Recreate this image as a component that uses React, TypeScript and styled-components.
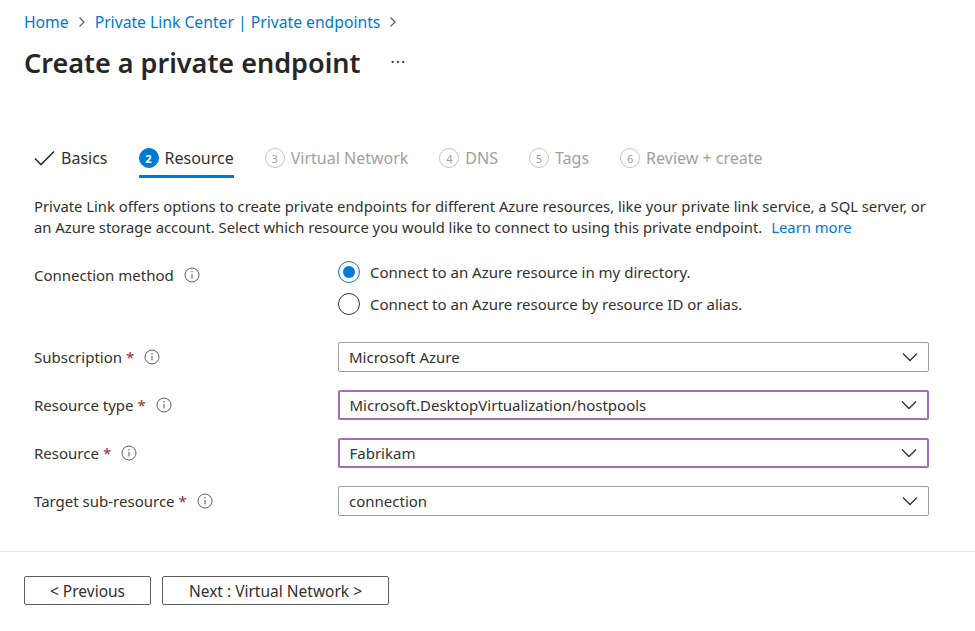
import React from "react";
import styled, { createGlobalStyle } from "styled-components";

const Global = createGlobalStyle`
  html, body { margin: 0; padding: 0; background: #ffffff; }
  body { font-family: "Noto Sans", "Open Sans", Arial, sans-serif; color: #323130; }
  * { box-sizing: border-box; }
`;

const Page = styled.div`
  width: 975px;
  height: 631px;
  overflow: hidden;
  display: flex;
  flex-direction: column;
`;

const Header = styled.div`
  padding: 11px 24px 0 24px;
`;

const Breadcrumb = styled.nav`
  display: flex;
  align-items: center;
  gap: 9px;
  font-size: 15.7px;
  line-height: 22px;
  color: #0078d4;
`;

const Crumb = styled.a`
  color: #0078d4;
  text-decoration: none;
`;

const Sep = styled.span`
  color: #605e5c;
  display: inline-flex;
  align-items: center;
`;

const TitleRow = styled.div`
  display: flex;
  align-items: center;
  gap: 30px;
  margin-top: 12px;
`;

const Title = styled.h1`
  margin: 0;
  font-size: 27px;
  line-height: 36px;
  font-weight: 600;
  color: #262626;
`;

const More = styled.span`
  font-size: 16px;
  color: #323130;
  letter-spacing: 1px;
  margin-top: -3px;
`;

const Body = styled.div`
  padding: 0 0 0 34px;
  flex: 1;
`;

const Tabs = styled.div`
  display: flex;
  gap: 31px;
  margin-top: 58px;
`;

const Tab = styled.div<{ $active?: boolean; $disabled?: boolean }>`
  display: flex;
  align-items: center;
  gap: 6px;
  height: 39px;
  padding-top: 2px;
  font-size: 16px;
  color: ${(p) => (p.$disabled ? "#a19f9d" : "#323130")};
  border-bottom: 3px solid ${(p) => (p.$active ? "#0078d4" : "transparent")};
`;

const Step = styled.span<{ $active?: boolean }>`
  width: 20px;
  height: 20px;
  border-radius: 50%;
  display: inline-flex;
  align-items: center;
  justify-content: center;
  font-size: 11px;
  font-weight: ${(p) => (p.$active ? 700 : 400)};
  color: ${(p) => (p.$active ? "#ffffff" : "#a19f9d")};
  background: ${(p) => (p.$active ? "#0078d4" : "transparent")};
  border: 1px solid ${(p) => (p.$active ? "#0078d4" : "#c8c6c4")};
`;

const Description = styled.p`
  margin: 18px 0 0 0;
  width: 900px;
  font-size: 14.8px;
  line-height: 21px;
  color: #323130;
`;

const Link = styled.a`
  color: #0078d4;
  text-decoration: none;
  margin-left: 9px;
`;

const Form = styled.div`
  margin-top: 23px;
  width: 895px;
  display: flex;
  flex-direction: column;
`;

const Row = styled.div<{ $gap?: number; $top?: boolean }>`
  display: grid;
  grid-template-columns: 304px 1fr;
  align-items: ${(p) => (p.$top ? "start" : "center")};
  margin-bottom: ${(p) => p.$gap ?? 18}px;
`;

const Label = styled.div<{ $offset?: number }>`
  display: flex;
  align-items: center;
  font-size: 15px;
  color: #323130;
  margin-top: ${(p) => p.$offset ?? 0}px;
`;

const Req = styled.span`
  color: #a4262c;
  margin-left: 4px;
`;

const InfoIcon = styled.span`
  display: inline-flex;
  margin-left: 10px;
`;

const RadioGroup = styled.div`
  display: flex;
  flex-direction: column;
  gap: 10px;
`;

const RadioRow = styled.label`
  display: flex;
  align-items: center;
  gap: 10px;
  font-size: 15px;
  height: 22px;
  color: #323130;
`;

const Radio = styled.span<{ $checked?: boolean }>`
  width: 22px;
  height: 22px;
  border-radius: 50%;
  border: ${(p) => (p.$checked ? "1.5px solid #0078d4" : "1.5px solid #323130")};
  display: inline-flex;
  align-items: center;
  justify-content: center;
  &::after {
    content: "";
    width: 12px;
    height: 12px;
    border-radius: 50%;
    background: ${(p) => (p.$checked ? "#0078d4" : "transparent")};
  }
`;

const Select = styled.div<{ $focus?: boolean }>`
  height: 30px;
  border: ${(p) => (p.$focus ? "2px solid #a56ab9" : "1.5px solid #a19f9d")};
  border-radius: 2px;
  display: flex;
  align-items: center;
  justify-content: space-between;
  padding: 0 10px 0 ${(p) => (p.$focus ? 9.5 : 10)}px;
  font-size: 15px;
  color: #323130;
`;

const Footer = styled.div`
  border-top: 1.5px solid #e6e6e6;
  padding: 24px 24px 26px 24px;
  display: flex;
  gap: 11px;
`;

const Button = styled.button<{ $w: number }>`
  width: ${(p) => p.$w}px;
  height: 29px;
  background: #ffffff;
  border: 1.5px solid #605e5c;
  border-radius: 2px;
  font-family: inherit;
  font-size: 15.5px;
  color: #323130;
  padding: 0;
`;

const Chevron = () => (
  <svg width="16" height="10" viewBox="0 0 16 10" fill="none">
    <path d="M1 1.5 L8 8.5 L15 1.5" stroke="#323130" strokeWidth="1.3" />
  </svg>
);

const SmallChevron = () => (
  <svg width="8" height="12" viewBox="0 0 8 12" fill="none">
    <path d="M1.5 1.5 L6 6 L1.5 10.5" stroke="#605e5c" strokeWidth="1.2" />
  </svg>
);

const Info = () => (
  <svg width="16" height="16" viewBox="0 0 16 16" fill="none">
    <circle cx="8" cy="8" r="7" stroke="#605e5c" strokeWidth="1" />
    <circle cx="8" cy="4.8" r="0.8" fill="#605e5c" />
    <path d="M8 7 V11.6" stroke="#605e5c" strokeWidth="1.1" />
  </svg>
);

const Check = () => (
  <svg width="21" height="16" viewBox="0 0 21 16" fill="none">
    <path d="M1 8.5 L7 14.5 L20 1.5" stroke="#323130" strokeWidth="1.6" />
  </svg>
);

type Field = { label: string; value: string; focus?: boolean };

const fields: Field[] = [
  { label: "Subscription", value: "Microsoft Azure" },
  { label: "Resource type", value: "Microsoft.DesktopVirtualization/hostpools", focus: true },
  { label: "Resource", value: "Fabrikam", focus: true },
  { label: "Target sub-resource", value: "connection" },
];

const steps = [
  { n: 3, label: "Virtual Network" },
  { n: 4, label: "DNS" },
  { n: 5, label: "Tags" },
  { n: 6, label: "Review + create" },
];

export default function App() {
  return (
    <Page>
      <Global />
      <Header>
        <Breadcrumb>
          <Crumb>Home</Crumb>
          <Sep><SmallChevron /></Sep>
          <Crumb>Private Link Center | Private endpoints</Crumb>
          <Sep><SmallChevron /></Sep>
        </Breadcrumb>
        <TitleRow>
          <Title>Create a private endpoint</Title>
          <More>···</More>
        </TitleRow>
      </Header>
      <Body>
        <Tabs>
          <Tab>
            <Check />
            Basics
          </Tab>
          <Tab $active>
            <Step $active>2</Step>
            Resource
          </Tab>
          {steps.map((s) => (
            <Tab key={s.n} $disabled>
              <Step>{s.n}</Step>
              {s.label}
            </Tab>
          ))}
        </Tabs>
        <Description>
          Private Link offers options to create private endpoints for different Azure resources, like your
          private link service, a SQL server, or an Azure storage account. Select which resource you would
          like to connect to using this private endpoint.
          <Link>Learn more</Link>
        </Description>
        <Form>
          <Row $gap={27} $top>
            <Label $offset={4}>
              Connection method
              <InfoIcon><Info /></InfoIcon>
            </Label>
            <RadioGroup>
              <RadioRow>
                <Radio $checked />
                Connect to an Azure resource in my directory.
              </RadioRow>
              <RadioRow>
                <Radio />
                Connect to an Azure resource by resource ID or alias.
              </RadioRow>
            </RadioGroup>
          </Row>
          {fields.map((f) => (
            <Row key={f.label}>
              <Label>
                {f.label}
                <Req>*</Req>
                <InfoIcon><Info /></InfoIcon>
              </Label>
              <Select $focus={f.focus}>
                <span>{f.value}</span>
                <Chevron />
              </Select>
            </Row>
          ))}
        </Form>
      </Body>
      <Footer>
        <Button $w={127}>&lt; Previous</Button>
        <Button $w={227}>Next : Virtual Network &gt;</Button>
      </Footer>
    </Page>
  );
}
